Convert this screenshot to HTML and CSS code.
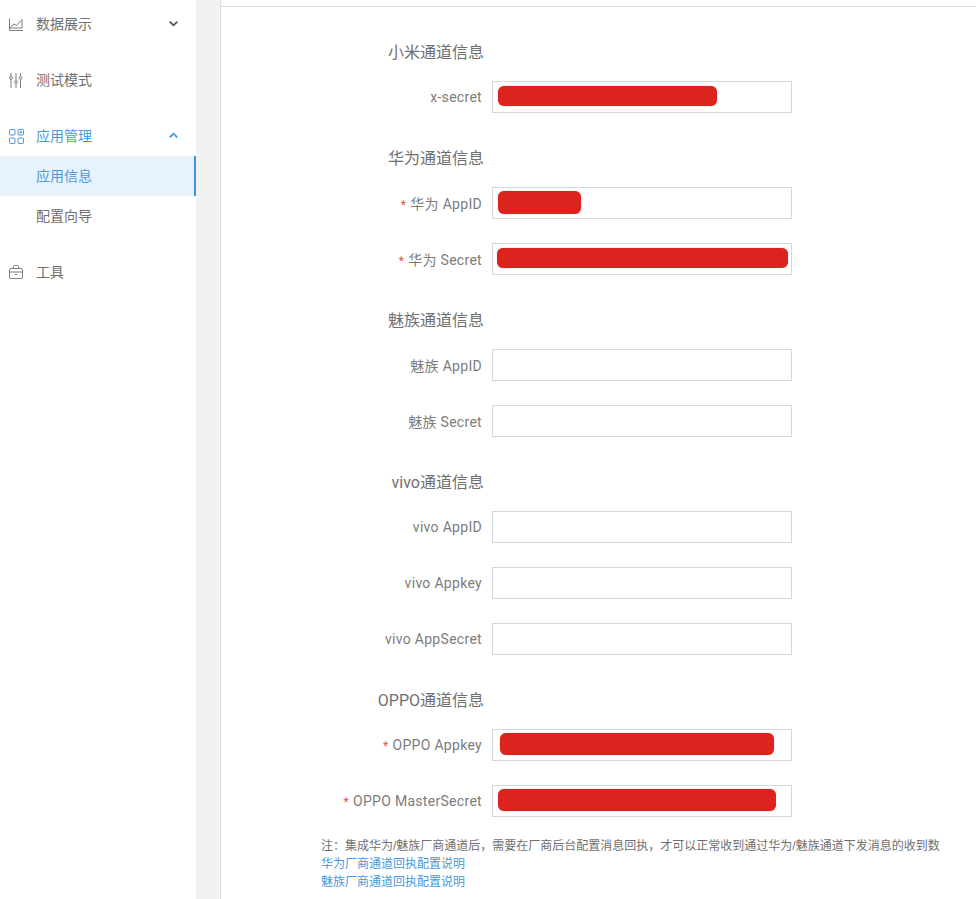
FILE: index.html
```html
<!DOCTYPE html>
<html lang="zh-CN">
<head>
    <meta charset="UTF-8">
    <meta name="viewport" content="width=device-width, initial-scale=1.0">
    <title>应用信息</title>
    <link rel="stylesheet" href="styles.css">
</head>
<body>
    <div class="layout">
        <aside class="sidebar">
            <div class="menu-item">
                <svg class="menu-icon" viewBox="0 0 16 16"><path d="M1.5 2.500V14.500H15M1.500 12 6 8l2.500 1.500L14 3.500V12Z"/></svg>
                <span class="menu-text">数据展示</span>
                <svg class="menu-arrow" viewBox="0 0 10 10"><path d="M.8 2.800 5 7 9.200 2.800"/></svg>
            </div>
            <div class="menu-item">
                <svg class="menu-icon" viewBox="0 0 16 16"><path d="M3 1v15M8 1v15M12.500 1v15"/><circle class="knob" cx="3" cy="6" r="1.400"/><circle class="knob" cx="8" cy="10" r="1.400"/><circle class="knob" cx="12.500" cy="6" r="1.400"/></svg>
                <span class="menu-text">测试模式</span>
            </div>
            <div class="menu-item menu-item-active">
                <svg class="menu-icon" viewBox="0 0 16 16"><rect x="1.500" y="1.500" width="5.500" height="5.500" rx=".8"/><rect x="10" y="1.500" width="5.500" height="5.500" rx=".8"/><rect x="1.500" y="10" width="5.500" height="5.500" rx=".8"/><rect x="10" y="10" width="5.500" height="5.500" rx=".8"/><rect class="dot" x="11.700" y="3.200" width="2.100" height="2.100"/></svg>
                <span class="menu-text">应用管理</span>
                <svg class="menu-arrow" viewBox="0 0 10 10"><path d="M.8 7.200 5 3 9.200 7.200"/></svg>
            </div>
            <div class="submenu">
                <div class="submenu-item submenu-item-active">应用信息</div>
                <div class="submenu-item">配置向导</div>
            </div>
            <div class="menu-item">
                <svg class="menu-icon" viewBox="0 0 16 16"><rect x="1.500" y="4.500" width="13" height="10" rx="1.500"/><path d="M5.500 4.500V2.500a1 1 0 0 1 1-1h3a1 1 0 0 1 1 1v2M1.500 8h13M6.500 10 8 11l1.500-1"/></svg>
                <span class="menu-text">工具</span>
            </div>
        </aside>
        <main class="content">
            <div class="content-top"></div>
            <section class="form-section">
                <h3 class="section-title">小米通道信息</h3>
                <div class="form-row">
                    <label class="form-label">x-secret</label>
                    <div class="form-input"><span class="mask mask-xsecret"></span></div>
                </div>
            </section>
            <section class="form-section">
                <h3 class="section-title">华为通道信息</h3>
                <div class="form-row">
                    <label class="form-label"><i class="required">*</i>华为 AppID</label>
                    <div class="form-input"><span class="mask mask-appid"></span></div>
                </div>
                <div class="form-row">
                    <label class="form-label"><i class="required">*</i>华为 Secret</label>
                    <div class="form-input"><span class="mask mask-secret"></span></div>
                </div>
            </section>
            <section class="form-section">
                <h3 class="section-title">魅族通道信息</h3>
                <div class="form-row">
                    <label class="form-label">魅族 AppID</label>
                    <div class="form-input"></div>
                </div>
                <div class="form-row">
                    <label class="form-label">魅族 Secret</label>
                    <div class="form-input"></div>
                </div>
            </section>
            <section class="form-section">
                <h3 class="section-title">vivo通道信息</h3>
                <div class="form-row">
                    <label class="form-label">vivo AppID</label>
                    <div class="form-input"></div>
                </div>
                <div class="form-row">
                    <label class="form-label">vivo Appkey</label>
                    <div class="form-input"></div>
                </div>
                <div class="form-row">
                    <label class="form-label">vivo AppSecret</label>
                    <div class="form-input"></div>
                </div>
            </section>
            <section class="form-section form-section-last">
                <h3 class="section-title">OPPO通道信息</h3>
                <div class="form-row">
                    <label class="form-label"><i class="required">*</i>OPPO Appkey</label>
                    <div class="form-input"><span class="mask mask-appkey"></span></div>
                </div>
                <div class="form-row">
                    <label class="form-label"><i class="required">*</i>OPPO MasterSecret</label>
                    <div class="form-input"><span class="mask mask-master"></span></div>
                </div>
            </section>
            <div class="note">
                <p>注：集成华为/魅族厂商通道后，需要在厂商后台配置消息回执，才可以正常收到通过华为/魅族通道下发消息的收到数</p>
                <a href="#">华为厂商通道回执配置说明</a>
                <a href="#">魅族厂商通道回执配置说明</a>
            </div>
        </main>
    </div>
</body>
</html>
```

FILE: styles.css
```css
* {
    margin: 0;
    padding: 0;
    box-sizing: border-box;
}

html, body {
    height: 100%;
    overflow: hidden;
}

body {
    background: #f1f1f1;
    color: #666;
    font-family: "Roboto", "Noto Sans CJK SC", sans-serif;
    font-size: 14px;
}

.layout {
    display: flex;
    height: 899px;
}

.sidebar {
    width: 196px;
    flex-shrink: 0;
    margin-right: 24px;
    background: #fff;
    padding-top: 3px;
}

.menu-item {
    display: flex;
    align-items: center;
    height: 40px;
    margin-bottom: 16px;
    padding: 0 18px 0 8px;
}

.menu-icon {
    width: 16px;
    height: 16px;
    margin-top: 2px;
    margin-right: 12px;
    fill: none;
    stroke: #808080;
    stroke-width: 1;
}

.menu-icon .knob {
    fill: #fff;
}

.menu-icon .dot {
    fill: #4a98dc;
    stroke: none;
}

.menu-text {
    flex: 1;
    color: #707070;
}

.menu-arrow {
    width: 9px;
    height: 9px;
    margin-top: 1px;
    fill: none;
    stroke: #555;
    stroke-width: 2;
}

.menu-item-active {
    margin-bottom: 1px;
}

.menu-item-active .menu-text {
    color: #4a98dc;
}

.menu-item-active .menu-icon,
.menu-item-active .menu-arrow {
    stroke: #4a98dc;
}

.submenu {
    margin-bottom: 15px;
}

.submenu-item {
    height: 40px;
    padding-left: 36px;
    line-height: 40px;
    color: #707070;
}

.submenu-item-active {
    background: #e6f3fd;
    border-right: 2px solid #3d94e0;
    color: #4a98dc;
}

.content {
    flex: 1;
    background: #fff;
    border-left: 1px solid #ddd;
}

.content-top {
    height: 7px;
    margin-bottom: 24px;
    border-bottom: 1px solid #ddd;
}

.form-section {
    padding-top: 8px;
}

.section-title {
    width: 263px;
    margin-bottom: 14px;
    font-size: 16px;
    font-weight: 400;
    line-height: 28px;
    text-align: right;
    color: #707070;
}

.form-row {
    display: flex;
    align-items: center;
    margin-bottom: 24px;
}

.form-section-last .form-row:last-child {
    margin-bottom: 20px;
}

.form-label {
    width: 261px;
    margin-right: 10px;
    letter-spacing: 0.3px;
    text-align: right;
    white-space: nowrap;
    color: #7c7c7c;
}

.required {
    margin-right: 4px;
    font-size: 12px;
    font-style: normal;
    color: #e5544f;
}

.form-input {
    display: flex;
    align-items: center;
    width: 300px;
    height: 32px;
    background: #fff;
    border: 1px solid #d3d8df;
}

.mask {
    display: block;
    height: 20px;
    margin-bottom: 2px;
    background: #dc241f;
    border-radius: 6px;
    box-shadow: 0 0 1px #ef6a66;
}

.mask-xsecret {
    width: 219px;
    margin-left: 5px;
}

.mask-appid {
    width: 83px;
    height: 23px;
    margin-left: 5px;
}

.mask-secret {
    width: 291px;
    margin-left: 4px;
}

.mask-appkey {
    width: 274px;
    height: 22px;
    margin-left: 7px;
}

.mask-master {
    width: 278px;
    height: 22px;
    margin-left: 5px;
}

.note {
    margin-left: 100px;
    font-family: "Liberation Sans", "Noto Sans CJK SC", sans-serif;
    font-size: 12px;
    line-height: 18px;
    white-space: nowrap;
    color: #707070;
}

.note a {
    display: block;
    color: #4a98dc;
    text-decoration: none;
}
```
